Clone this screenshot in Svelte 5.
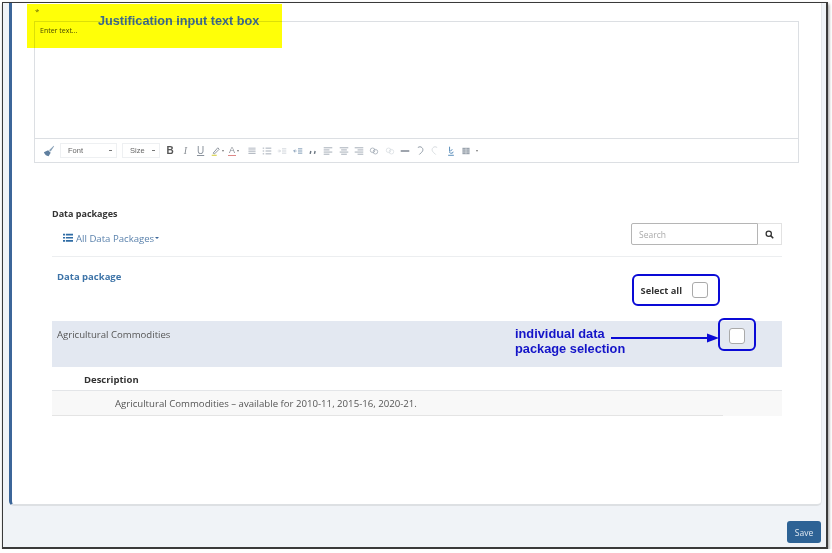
<script>
  const alignGroups = ['left', 'center', 'right'];
</script>

<div class="frame">
  <main class="card">
    <div class="req">*</div>
    <section class="editor">
      <div class="edit-area">Enter text...</div>
      <div class="toolbar">
        <svg class="ic brush" viewBox="0 0 14 14"><path d="M1 8.500 L6 6 L9 9 L6.500 13 Q3 13 1 8.500Z" fill="#5f7f9f"/><path d="M7 6 L12.500 1 L13 1.600 L9 7.500Z" fill="#8aa2b8"/></svg>
        <div class="sel font"><span>Font</span><i></i></div>
        <div class="sel size"><span>Size</span><i></i></div>
        <b class="t b">B</b>
        <i class="t it">I</i>
        <u class="t un">U</u>
        <svg class="ic pen" viewBox="0 0 14 14"><path d="M3 10 L9.500 2.500 L11.500 4.500 L5 11Z" fill="none" stroke="#8a929c" stroke-width="1.300"/><path d="M1 13 H8" stroke="#d8d24a" stroke-width="1.600"/></svg><span class="car first"></span>
        <span class="t a">A</span><span class="car"></span>
        <svg class="ic m1" viewBox="0 0 14 14"><path d="M2 3h10M2 5.500h10M2 8h10M2 10.500h10" stroke="#a8b0ba" stroke-width="1.200"/></svg>
        <svg class="ic" viewBox="0 0 14 14"><path d="M5 3h8M5 7h8M5 11h8" stroke="#98a2ad" stroke-width="1.200"/><path d="M1 3h2M1 7h2M1 11h2" stroke="#98a2ad" stroke-width="1.200"/></svg>
        <svg class="ic" viewBox="0 0 14 14"><path d="M7 4h6M7 7h6M7 10h6" stroke="#c8ced5" stroke-width="1.200"/><path d="M1 7h4M3 5l2 2-2 2" stroke="#c8ced5" fill="none"/></svg>
        <svg class="ic" viewBox="0 0 14 14"><path d="M7 4h6M7 7h6M7 10h6" stroke="#6d8cab" stroke-width="1.200"/><path d="M5 7H1M3 5L1 7l2 2" stroke="#6d8cab" fill="none"/></svg>
        <svg class="ic" viewBox="0 0 14 14"><path d="M4 7l-1 4M10 7l-1 4" stroke="#6a7580" stroke-width="2"/></svg>
        {#each alignGroups as g}
          <svg class="ic" viewBox="0 0 14 14"><path d={g === 'left' ? 'M1 2.500h12M1 5.500h8M1 8.500h12M1 11.500h8' : g === 'center' ? 'M1 2.500h12M3 5.500h8M1 8.500h12M3 11.500h8' : 'M1 2.500h12M5 5.500h8M1 8.500h12M5 11.500h8'} stroke="#98a2ad" stroke-width="1.200"/></svg>
        {/each}
        <svg class="ic" viewBox="0 0 14 14"><circle cx="5" cy="6" r="3.200" fill="none" stroke="#98a2ad"/><circle cx="9" cy="8" r="3.200" fill="none" stroke="#98a2ad"/></svg>
        <svg class="ic" viewBox="0 0 14 14"><circle cx="5" cy="6" r="3.200" fill="none" stroke="#d5dade"/><circle cx="9" cy="8" r="3.200" fill="none" stroke="#d5dade"/></svg>
        <svg class="ic" viewBox="0 0 14 14"><path d="M1 7h12" stroke="#77808c" stroke-width="2"/></svg>
        <svg class="ic" viewBox="0 0 14 14"><path d="M4 2 L7 1 C12 2 12 7 9 9 L6 12" fill="none" stroke="#8d97a2" stroke-width="1.300"/></svg>
        <svg class="ic" viewBox="0 0 14 14"><path d="M10 2 L7 1 C2 2 2 7 5 9 L8 12" fill="none" stroke="#d5dade" stroke-width="1.300"/></svg>
        <svg class="ic" viewBox="0 0 14 14"><path d="M5 1 L5 7 M3 13 H11 M9 5 Q3 8 6 10 Q10 11 10 8" fill="none" stroke="#4f86b5" stroke-width="1.300"/></svg>
        <svg class="ic" viewBox="0 0 14 14"><rect x="2" y="2.500" width="10" height="9" fill="#9aa3ad"/><path d="M2 5.500h10M2 8.500h10M7 2.500v9" stroke="#fff" stroke-width=".6"/></svg><span class="car"></span>
      </div>
    </section>

    <section class="packages">
      <h2>Data packages</h2>
      <div class="filter-row">
        <div class="filter">
          <svg class="list" viewBox="0 0 12 11"><path d="M0 .500h2.500v2H0zM0 4.200h2.500v2H0zM0 8h2.500v2H0zM3.500 .500H12v2H3.500zM3.500 4.200H12v2H3.500zM3.500 8H12v2H3.500z" fill="#2f6ca5"/></svg>
          <span>All Data Packages</span><span class="caret"></span>
        </div>
        <div class="search">
          <div class="search-input">Search</div>
          <div class="search-btn">
            <svg viewBox="0 0 12 12"><circle cx="5" cy="5" r="3.500" fill="none" stroke="#333" stroke-width="1.700"/><path d="M7.500 7.500L11 11" stroke="#333" stroke-width="2"/></svg>
          </div>
        </div>
      </div>
      <div class="head-row">
        <div class="col-title">Data package</div>
        <div class="select-all">
          <span>Select all</span>
          <span class="check"></span>
        </div>
      </div>
      <div class="pkg-row">
        <span>Agricultural Commodities</span>
        <span class="check"></span>
      </div>
      <div class="desc-title">Description</div>
      <div class="desc-row">Agricultural Commodities – available for 2010-11, 2015-16, 2020-21.</div>
    </section>
  </main>
  <footer class="foot">
    <button class="save">Save</button>
  </footer>

  <div class="note-yellow">Justification input text box</div>
  <div class="note-blue">individual data<br />package selection</div>
  <svg class="arrow" viewBox="0 0 108 12"><path d="M0 6H96" stroke="#0a0ad6" stroke-width="2"/><path d="M96 1.500L108 6L96 10.500Z" fill="#0a0ad6"/></svg>
  <div class="hl hl-all"></div>
  <div class="hl hl-one"></div>
</div>

<style>
  :global(body) {
    margin: 0;
    background: #fff;
    font-family: "Open Sans", "Liberation Sans", sans-serif;
  }
  .frame {
    position: relative;
    box-sizing: border-box;
    width: 826px;
    height: 547px;
    margin: 2px 0 0 2px;
    border: 1px solid #3a3a3a;
    border-width: 1px 2px 2px 1px;
    background: #f0f3f7;
    box-shadow: 1px 2px 3px #9a9a9a;
    display: flex;
    flex-direction: column;
    overflow: hidden;
  }
  .card {
    box-sizing: border-box;
    height: 503px;
    margin: 0 4px 0 6px;
    flex: none;
    background: #fff;
    border-left: 3px solid #3c6699;
    border-right: 1px solid #e3e6e9;
    border-bottom: 2px solid #dde0e3;
    border-radius: 0 0 5px 5px;
    padding: 3px 0 0 22px;
  }
  .req {
    height: 15px;
    font-size: 8px;
    line-height: 9px;
    color: #6b6a20;
    padding-left: 1px;
  }
  .editor {
    width: 765px;
    height: 142px;
    box-sizing: border-box;
    border: 1px solid #dcdfe3;
    display: flex;
    flex-direction: column;
  }
  .edit-area {
    height: 116px;
    flex: none;
    box-sizing: border-box;
    padding: 3px 5px;
    font-size: 7px;
    line-height: 12px;
    color: #4a4a3a;
  }
  .toolbar {
    flex: 1;
    border-top: 1px solid #dcdfe3;
    display: flex;
    align-items: center;
    padding-left: 8px;
    font-family: "Liberation Sans", sans-serif;
    color: #7b8590;
  }
  .ic {
    width: 10px;
    height: 10px;
    margin-right: 5.300px;
    flex: none;
  }
  .brush {
    width: 12px;
    height: 12px;
    margin-right: 5px;
  }
  .pen { margin-right: 1px; }
  .m1 { margin-left: 3px; }
  .sel {
    box-sizing: border-box;
    height: 15px;
    border: 1px solid #eef0f2;
    display: flex;
    align-items: center;
    justify-content: space-between;
    font-size: 7.500px;
    color: #666;
    margin-right: 5px;
    flex: none;
  }
  .sel i {
    width: 3px;
    height: 1px;
    background: #777;
  }
  .font { width: 57px; padding: 0 4px 0 7px; }
  .size { width: 38px; padding: 0 4px 0 7px; margin-right: 5px; }
  .t {
    font-size: 10px;
    width: 10px;
    margin-right: 5.300px;
    text-align: center;
    flex: none;
    line-height: 12px;
  }
  .b { color: #555; }
  .it { color: #8a8f96; font-family: "Liberation Serif", serif; }
  .un { color: #8a929c; }
  .a {
    color: #8a8f96;
    border-bottom: 1px solid #d88;
    line-height: 9px;
    margin-right: 1px;
    width: 8px;
    font-size: 9px;
  }
  .car {
    width: 0;
    height: 0;
    border: 1.500px solid transparent;
    border-top: 2px solid #777;
    border-bottom: 0;
    margin-right: 5px;
  }
  .car.first { margin-right: 4px; }
  .packages {
    width: 730px;
    margin: 44px 0 0 18px;
  }
  h2 {
    margin: 0;
    font-size: 9px;
    line-height: 14px;
    font-weight: 700;
    color: #333;
  }
  .filter-row {
    height: 36px;
    box-sizing: border-box;
    display: flex;
    justify-content: space-between;
    border-bottom: 1px solid #eceef0;
  }
  .filter {
    display: flex;
    align-items: center;
    height: 24px;
    margin-top: 5px;
    padding-left: 11px;
    font-size: 9.600px;
    color: #5c83ad;
  }
  .list { width: 10px; height: 10px; margin-right: 3px; }
  .caret {
    width: 0;
    height: 0;
    border: 2px solid transparent;
    border-top: 2.500px solid #3c6699;
    border-bottom: 0;
    margin-left: 1px;
  }
  .search {
    display: flex;
    height: 22px;
    width: 151px;
    margin-top: 2px;
  }
  .search-input {
    flex: 1;
    box-sizing: border-box;
    border: 1px solid #b5b5b5;
    border-radius: 2px 0 0 2px;
    font-size: 8.500px;
    line-height: 21px;
    padding-left: 7px;
    color: #aaa;
  }
  .search-btn {
    width: 24px;
    box-sizing: border-box;
    border: 1px solid #e2e2e2;
    border-left: 0;
    display: flex;
    align-items: center;
    justify-content: center;
  }
  .search-btn svg { width: 9px; height: 9px; }
  .head-row {
    height: 64px;
    box-sizing: border-box;
    display: flex;
    justify-content: space-between;
    padding: 13px 74px 0 5px;
  }
  .col-title {
    font-size: 9.500px;
    font-weight: 700;
    line-height: 13px;
    color: #3e74a8;
  }
  .select-all {
    display: flex;
    align-items: center;
    height: 22px;
    margin-top: 9px;
    gap: 10px;
    font-size: 9.300px;
    font-weight: 700;
    color: #333;
  }
  .check {
    box-sizing: border-box;
    width: 16px;
    height: 16px;
    border: 1px solid #aaa;
    border-radius: 3px;
    background: #fff;
    flex: none;
  }
  .pkg-row {
    height: 46px;
    box-sizing: border-box;
    background: #e3e8f1;
    display: flex;
    justify-content: space-between;
    padding: 7px 37px 0 5px;
    font-size: 9.600px;
    line-height: 13px;
    color: #555;
  }
  .desc-title {
    height: 24px;
    box-sizing: border-box;
    border-bottom: 1px solid #e3e5e8;
    padding: 6px 0 0 32px;
    font-size: 9.500px;
    line-height: 13px;
    font-weight: 700;
    color: #333;
  }
  .desc-row {
    height: 25px;
    box-sizing: border-box;
    background: linear-gradient(#e4e4e4, #e4e4e4) left bottom / 671px 1px no-repeat, #f8f8f8;
    padding: 6px 0 0 63px;
    font-size: 9.650px;
    line-height: 13px;
    color: #555;
  }
  .foot {
    flex: 1;
    display: flex;
    justify-content: flex-end;
    align-items: flex-start;
    padding: 15px 5px 0 0;
  }
  .save {
    width: 34px;
    height: 22px;
    padding: 0;
    border: 0;
    border-radius: 3px;
    background: #2d6295;
    color: #dfe8f1;
    font: 8.500px "Open Sans", "Liberation Sans", sans-serif;
  }
  .note-yellow {
    position: absolute;
    left: 24px;
    top: 1px;
    width: 255px;
    height: 44px;
    box-sizing: border-box;
    background: rgba(255, 255, 0, .97);
    mix-blend-mode: multiply;
    padding: 10px 0 0 71px;
    font: 700 12.700px/14px "Liberation Sans", sans-serif;
    color: #3d6a8c;
    white-space: nowrap;
  }
  .note-blue {
    position: absolute;
    left: 512px;
    top: 323px;
    font: 700 12.800px/15px "Liberation Sans", sans-serif;
    color: #1414c8;
  }
  .arrow {
    position: absolute;
    left: 608px;
    top: 329px;
    width: 108px;
    height: 12px;
  }
  .hl {
    position: absolute;
    box-sizing: border-box;
    border: 2px solid #0a0ad6;
    border-radius: 6px;
  }
  .hl-all { left: 629px; top: 271px; width: 88px; height: 32px; }
  .hl-one { left: 715px; top: 315px; width: 38px; height: 33px; }
</style>
